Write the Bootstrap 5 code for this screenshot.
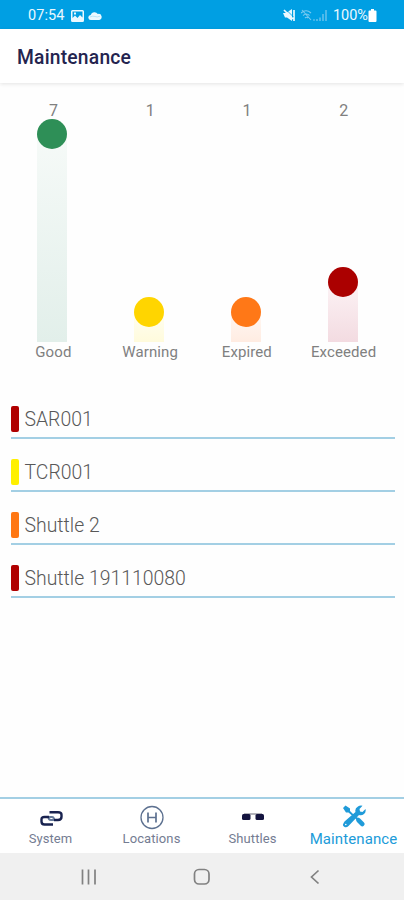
<!DOCTYPE html>
<html lang="en">
<head>
<meta charset="utf-8">
<meta name="viewport" content="width=device-width, initial-scale=1">
<title>Maintenance</title>
<link href="https://cdn.jsdelivr.net/npm/bootstrap@5.3.0/dist/css/bootstrap.min.css" rel="stylesheet">
<style>
body{font-family:Roboto,"Liberation Sans",sans-serif;color:#808080;background:#fefefe;height:900px;overflow:hidden}
svg{display:block;flex:none}
.status{height:29px;background:#009fe3;color:#eaf8ff;padding:2px 27px 0 28px;font-size:14.5px;line-height:27px}
.status .time{letter-spacing:.1px;margin-right:6px}
.title-bar{height:54px;padding:0 17px;box-shadow:0 1px 4px rgba(0,0,0,.11);background:#fff}
.title-bar h1{font-size:19.3px;font-weight:500;color:#24244f;letter-spacing:.2px;line-height:24px;margin-top:3px}
.chart{height:280px;padding:17px 13px 0 4px;font-size:15px}
.count{height:19px;line-height:22px;font-size:16px;padding-left:2px}
.track{height:223px}
.bar{width:30px}
.bar::before{content:"";display:block;width:30px;height:30px;border-radius:50%;background:var(--dot)}
.bar-name{line-height:20px;letter-spacing:.1px;padding-left:2px}
.good{--dot:#2e8f57;background:linear-gradient(transparent 15px,#f6faf8 15px,#e2efea)}
.warn{--dot:#ffd500;background:linear-gradient(transparent 15px,#fffef2 15px,#fffbdc)}
.expired{--dot:#ff7817;background:linear-gradient(transparent 15px,#fff8f3 15px,#ffece2)}
.exceeded{--dot:#ab0000;background:linear-gradient(transparent 15px,#fcf3f5 15px,#f3dbe1)}
.items{padding:43px 9px 0 11px}
.item{height:33px;margin-bottom:20px;border-bottom:2px solid #a3cfe4}
.item-name{font-size:19.4px;line-height:27px;font-weight:300;color:#585858;margin-left:6px}
.tag{width:7.5px;height:26px;border-radius:2px}
.tabs{height:56px;border-top:2px solid #a3cfe4;background:#fff;font-size:13px;color:#747c92}
.tab{padding-top:5px}
.tab-name{line-height:18px;letter-spacing:.1px}
.tab.current{color:#209bd9}
.tab.current .tab-name{font-size:15px}
.keys{height:47px;background:#f0f0f0}
</style>
</head>
<body class="d-flex flex-column">
<header class="status d-flex align-items-center">
  <span class="time">07:54</span>
  <svg width="13" height="12" viewBox="0 0 13 12"><path fill="#eaf8ff" fill-rule="evenodd" d="M1.500 0h10A1.500 1.500 0 0 1 13 1.500v9a1.500 1.500 0 0 1-1.500 1.500h-10A1.500 1.500 0 0 1 0 10.500v-9A1.500 1.500 0 0 1 1.500 0zM1.500 1.500v6.500l2.500-2.500 2.500 2.500 2.500-3 2.500 2.500v-6zM3 2.500h2v2H3z"/></svg>
  <svg class="ms-1" width="14" height="10" viewBox="0 0 14 10"><path fill="#eaf8ff" d="M3 9a2.500 2.500 0 0 1-.3-5A4 4 0 0 1 9.800 3a3 3 0 0 1 1.500 6z"/><path d="M2 6q3-1.500 5-.5t5-.3" stroke="#b9e4f7" fill="none"/></svg>
  <svg class="ms-auto" width="14" height="13" viewBox="0 0 14 13"><path fill="#eaf8ff" d="M0 4h3l6-4v12L4 8.500H2z"/><path d="M1 1l9 9M11 1v11" stroke="#eaf8ff" stroke-width="1.700"/><path d="M2.500 0l8 8" stroke="#009fe3" stroke-width=".8"/></svg>
  <svg class="ms-1" width="15" height="13" viewBox="0 0 15 13" fill="none" stroke="#7bcaf0" stroke-width="1.100"><path d="M0 4q5-4.500 10 0M2 6.500q3.500-3 6.500 0M4 9q1.500-1.500 3 0M1 1l9 10M12 11h2"/></svg>
  <svg width="13" height="13" viewBox="0 0 13 13" fill="#6cc4ed"><path d="M0 10h2v2H0zM3 8.500h2V12H3zM6 5h2v7H6zM9 1h2v11H9z" opacity=".7"/></svg>
  <span class="ps-1">100%</span>
  <svg width="9" height="13" viewBox="0 0 9 13"><path fill="#fff" d="M3 0h3v1.500h1.500q1 0 1 1V12q0 1-1 1h-6q-1 0-1-1V2.500q0-1 1-1H3z"/></svg>
</header>
<div class="title-bar d-flex align-items-center"><h1 class="mb-0">Maintenance</h1></div>
<main class="flex-grow-1">
  <section class="chart d-flex text-center">
    <div class="col-3"><div class="count">7</div><div class="track d-flex align-items-end justify-content-center"><div class="bar good" style="height:223px"></div></div><div class="bar-name">Good</div></div>
    <div class="col-3"><div class="count">1</div><div class="track d-flex align-items-end justify-content-center"><div class="bar warn" style="height:45px"></div></div><div class="bar-name">Warning</div></div>
    <div class="col-3"><div class="count">1</div><div class="track d-flex align-items-end justify-content-center"><div class="bar expired" style="height:45px"></div></div><div class="bar-name">Expired</div></div>
    <div class="col-3"><div class="count">2</div><div class="track d-flex align-items-end justify-content-center"><div class="bar exceeded" style="height:75px"></div></div><div class="bar-name">Exceeded</div></div>
  </section>
  <section class="items">
    <div class="item d-flex"><span class="tag" style="background:#b00000"></span><span class="item-name">SAR001</span></div>
    <div class="item d-flex"><span class="tag" style="background:#fff000"></span><span class="item-name">TCR001</span></div>
    <div class="item d-flex"><span class="tag" style="background:#ff7713"></span><span class="item-name">Shuttle 2</span></div>
    <div class="item d-flex"><span class="tag" style="background:#b00000"></span><span class="item-name">Shuttle 191110080</span></div>
  </section>
</main>
<nav class="tabs d-flex text-center">
  <div class="tab col-3 d-flex flex-column align-items-center">
    <svg width="24" height="26" viewBox="0 0 24 26" fill="none" stroke-width="2.400"><path stroke="#64799a" stroke-width="2" d="M9 13h4q2 0 2 3M15.500 16H12q-2.500 0-2.500-3"/><path stroke="#18224f" d="M10.500 8.300H19q3.500 0 3.500 2.500v2q0 3.200-3.500 3.200h-4M10 13H5.500q-3 0-3 2.500v2q0 3 3 3H14"/></svg>
    <span class="tab-name">System</span>
  </div>
  <div class="tab col-3 d-flex flex-column align-items-center">
    <svg width="24" height="26" viewBox="0 0 24 26" fill="none" stroke="#5d7190"><circle cx="12" cy="13.500" r="11" stroke-width="1.300"/><path stroke-width="1.700" d="M8 8.500v10M16 8.500v10M8 13.500h8"/></svg>
    <span class="tab-name">Locations</span>
  </div>
  <div class="tab col-3 d-flex flex-column align-items-center">
    <svg width="24" height="26" viewBox="0 0 24 26"><path d="M3 10h18" stroke="#9b9ba5" stroke-width="1.500"/><rect x="1" y="10" width="8.500" height="6" rx="1.500" fill="#14143f"/><rect x="14.500" y="10" width="8.500" height="6" rx="1.500" fill="#14143f"/></svg>
    <span class="tab-name">Shuttles</span>
  </div>
  <div class="tab current col-3 d-flex flex-column align-items-center">
    <svg width="24" height="26" viewBox="0 0 24 26" fill="#209bd9"><path d="M1 4L3.500 1.500l4.500 3v2.500l4 4 3 2.500q2 0 3 1l4 4q1.500 1.500 0 3t-3 .5l-4-4q-1-1-1-3L6.500 8.500H4z"/><path d="M16 2.500q2-1.500 4.500-.8l-3 3.300.5 2.500 2.500.5 3-3q.8 3-1.500 5t-5 1L6.500 22q-2 2-4 1T1 20.500t1.500-3L13.500 8q-1-3.500 2.500-5.500z"/><circle cx="3.800" cy="20.500" r=".8" fill="#fff"/></svg>
    <span class="tab-name">Maintenance</span>
  </div>
</nav>
<footer class="keys d-flex justify-content-center align-items-center">
  <svg width="404" height="47" viewBox="0 0 404 47" fill="none" stroke="#818181" stroke-width="1.700"><path d="M82.500 16.500v15M88.500 16.500v15M95 16.500v15M318.500 17.500l-7 6.500 7 6.500"/><rect x="194.500" y="16.500" width="14.500" height="14.500" rx="4.500"/></svg>
</footer>
<script src="https://cdn.jsdelivr.net/npm/bootstrap@5.3.0/dist/js/bootstrap.bundle.min.js"></script>
</body>
</html>
